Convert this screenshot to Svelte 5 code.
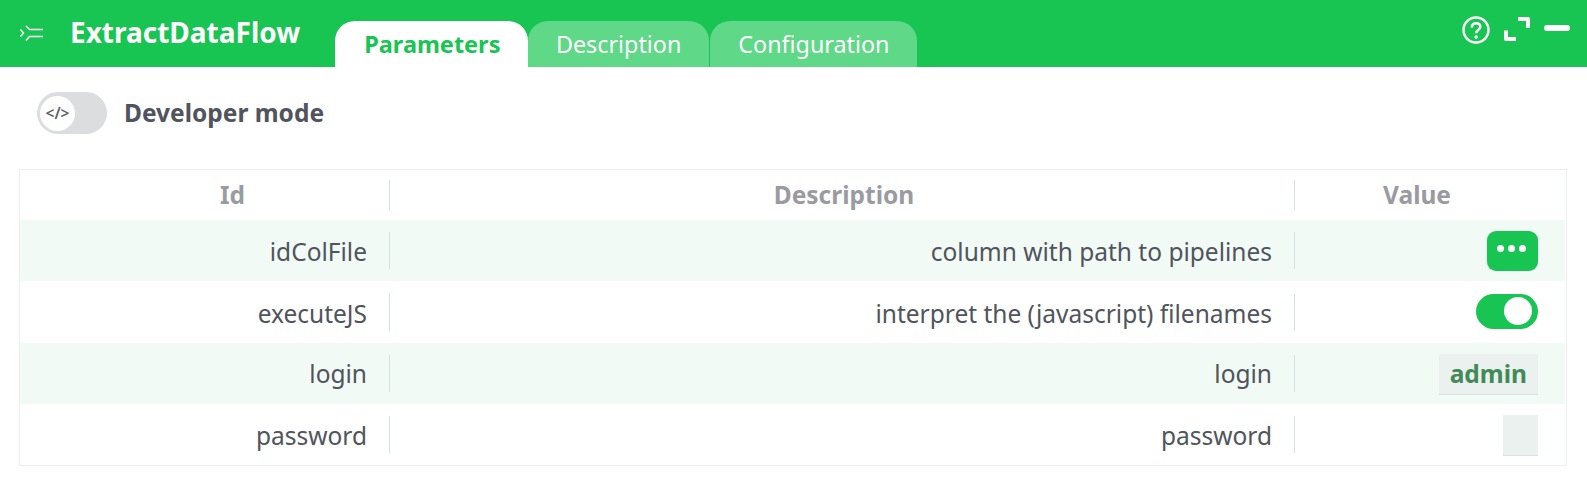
<script>
  const tabs = ["Parameters", "Description", "Configuration"];
  let activeTab = $state(0);
  let devMode = $state(false);

  const rows = [
    { id: "idColFile", description: "column with path to pipelines", kind: "button" },
    { id: "executeJS", description: "interpret the (javascript) filenames", kind: "toggle" },
    { id: "login", description: "login", kind: "text", value: "admin" },
    { id: "password", description: "password", kind: "text", value: "" }
  ];
</script>

<div class="panel">
  <header class="topbar">
    <svg class="flow-icon" viewBox="0 0 24 16" width="24" height="16" aria-hidden="true">
      <path d="M1.500 4.500 4.500 8 1.500 11.500M7 1l3.500 3.500H24M7 15.500l3.500-4H24" fill="none" stroke="#fff" stroke-width="1.500" />
    </svg>
    <h1>ExtractDataFlow</h1>
    <nav class="tabs">
      {#each tabs as tab, i}
        <button class="tab" class:active={activeTab === i} onclick={() => (activeTab = i)}>{tab}</button>
      {/each}
    </nav>
    <div class="actions">
      <svg viewBox="0 0 28 28" width="28" height="28" aria-hidden="true">
        <circle cx="14" cy="14" r="12.500" fill="none" stroke="#fff" stroke-width="2.400" />
        <path d="M9.800 11.400c0-2.700 1.900-4.200 4.300-4.200 2.500 0 4.200 1.500 4.200 3.600 0 3.200-4.200 3-4.200 6.400" fill="none" stroke="#fff" stroke-width="2.500" />
        <circle cx="14.100" cy="21" r="1.700" fill="#fff" />
      </svg>
      <svg class="expand" viewBox="0 0 26 24" width="26" height="24" aria-hidden="true">
        <path d="M14 2h10v9M2 13.500V22h10" fill="none" stroke="#fff" stroke-width="4" stroke-linejoin="round" />
      </svg>
      <span class="minimize"></span>
    </div>
  </header>

  <div class="dev-row">
    <button class="dev-toggle" class:on={devMode} onclick={() => (devMode = !devMode)} aria-label="Developer mode">
      <span class="dev-knob">&lt;/&gt;</span>
    </button>
    <span class="dev-label">Developer mode</span>
  </div>

  <div class="table">
    <div class="row head">
      <div class="cell id">Id</div>
      <div class="cell desc">Description</div>
      <div class="cell val">Value</div>
    </div>
    {#each rows as row, i}
      <div class="row" class:tint={i % 2 === 0}>
        <div class="cell">{row.id}</div>
        <div class="cell">{row.description}</div>
        <div class="cell value">
          {#if row.kind === "button"}
            <button class="more" aria-label="Edit">
              <i></i><i></i><i></i>
            </button>
          {:else if row.kind === "toggle"}
            <span class="switch"><span></span></span>
          {:else}
            <span class="field">{row.value}</span>
          {/if}
        </div>
      </div>
    {/each}
  </div>
</div>

<style>
  :global(body) {
    margin: 0;
    background: #fff;
  }
  .panel {
    font-family: "Noto Sans", sans-serif;
    color: #50545c;
    height: 484px;
    overflow: hidden;
  }
  .topbar {
    height: 67px;
    background: #19c552;
    display: flex;
    align-items: flex-end;
    position: relative;
  }
  .flow-icon {
    align-self: flex-start;
    margin: 25px 0 0 19px;
  }
  h1 {
    align-self: flex-start;
    margin: 13px 0 0 27px;
    color: #fff;
    font-size: 28px;
    line-height: 38px;
    font-weight: 700;
  }
  .tabs {
    display: flex;
    margin-left: 35px;
  }
  .tab {
    height: 46px;
    padding: 0 27.500px;
    border: 0;
    border-radius: 20px 20px 0 0;
    background: #5fd887;
    color: #fff;
    font: 400 23.300px "Noto Sans", sans-serif;
  }
  .tab:last-child {
    padding: 0 28px 0 28.500px;
    margin-left: 1px;
  }
  .tab.active {
    background: #fff;
    color: #19c552;
    font-weight: 700;
    font-size: 23.500px;
    padding: 0 28px 0 29px;
  }
  .actions {
    position: absolute;
    top: 16px;
    right: 17px;
    display: flex;
    align-items: flex-start;
  }
  .expand {
    margin: 1px 0 0 14px;
  }
  .minimize {
    width: 26px;
    height: 6px;
    border-radius: 3px;
    background: #fff;
    margin: 9px 0 0 14px;
  }
  .dev-row {
    display: flex;
    align-items: center;
    gap: 17px;
    height: 42px;
    margin: 25px 0 35px 37px;
  }
  .dev-toggle {
    width: 70px;
    height: 42px;
    border: 0;
    border-radius: 21px;
    background: #dcdddf;
    padding: 3px;
    display: flex;
  }
  .dev-knob {
    width: 35px;
    height: 35px;
    margin: auto 0;
    border-radius: 50%;
    background: #fff;
    color: #5c5f66;
    font: 600 15.500px/34px "Noto Sans", sans-serif;
    text-align: center;
  }
  .dev-label {
    font-size: 24.500px;
    line-height: 34px;
    font-weight: 700;
  }
  .table {
    margin: 0 20px 0 19px;
    border: 1px solid #ebefee;
    padding-right: 1px;
  }
  .row {
    display: grid;
    grid-template-columns: 370px 905px 269px;
    height: 61px;
    align-items: center;
  }
  .row:nth-child(3) {
    height: 62px;
  }
  .row:nth-child(4) .cell {
    line-height: 37px;
  }
  .row.head {
    height: 50px;
    color: #999ba0;
    font-weight: 700;
  }
  .tint {
    background: #f2faf6;
  }
  .cell {
    font-size: 24.500px;
    line-height: 39px;
    height: 37px;
    text-align: right;
    padding-right: 22px;
    border-right: 1px solid #d5e3df;
  }
  .row.head .cell {
    line-height: 30px;
    height: 30px;
    text-align: center;
  }
  .row.head .id {
    padding: 0 0 0 56px;
  }
  .row.head .desc {
    padding: 0 0 0 4px;
  }
  .row.head .val {
    padding: 0 25px 0 0;
  }
  .cell:last-child {
    border-right: 0;
  }
  .cell.value {
    padding-right: 26px;
    display: flex;
    justify-content: flex-end;
    align-items: center;
  }
  .more {
    width: 51px;
    height: 40px;
    border: 0;
    border-radius: 9px;
    background: #19c552;
    display: flex;
    justify-content: center;
    align-items: center;
    gap: 4px;
    padding: 0 2px 4px 0;
  }
  .more i {
    width: 7px;
    height: 7px;
    border-radius: 50%;
    background: #fff;
  }
  .switch {
    align-self: flex-start;
    width: 62px;
    height: 35px;
    border-radius: 18px;
    background: #19c552;
    display: flex;
    justify-content: flex-end;
    align-items: center;
    padding-right: 6px;
    box-sizing: border-box;
  }
  .switch span {
    width: 28px;
    height: 28px;
    border-radius: 50%;
    background: #fff;
  }
  .field {
    min-width: 35px;
    height: 41px;
    box-sizing: border-box;
    margin-top: 1px;
    padding: 0 11px;
    background: #ebf1ee;
    border-bottom: 1px solid #d5e3df;
    color: #438a5a;
    font-size: 24.500px;
    font-weight: 700;
    line-height: 40px;
  }
</style>
